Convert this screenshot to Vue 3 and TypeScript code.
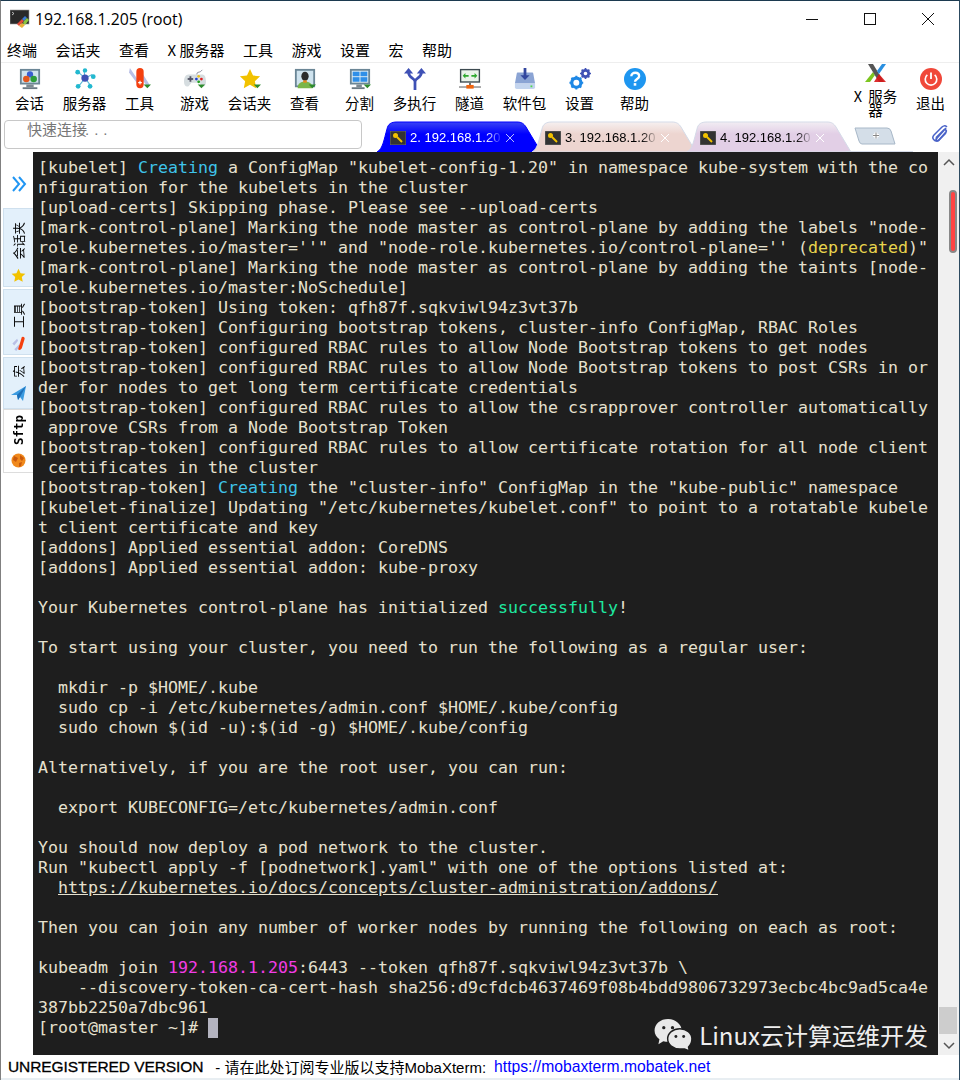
<script setup lang="ts">
type Seg = { t: string; c?: string };
const C = 'cy', Y = 'ye', G = 'gr', M = 'ma', U = 'ul';
const lines: Seg[][] = [
  [{ t: '[kubelet] ' }, { t: 'Creating', c: C }, { t: ' a ConfigMap "kubelet-config-1.20" in namespace kube-system with the co' }],
  [{ t: 'nfiguration for the kubelets in the cluster' }],
  [{ t: '[upload-certs] Skipping phase. Please see --upload-certs' }],
  [{ t: '[mark-control-plane] Marking the node master as control-plane by adding the labels "node-' }],
  [{ t: 'role.kubernetes.io/master=\'\'" and "node-role.kubernetes.io/control-plane=\'\' (' }, { t: 'deprecated', c: Y }, { t: ')"' }],
  [{ t: '[mark-control-plane] Marking the node master as control-plane by adding the taints [node-' }],
  [{ t: 'role.kubernetes.io/master:NoSchedule]' }],
  [{ t: '[bootstrap-token] Using token: qfh87f.sqkviwl94z3vt37b' }],
  [{ t: '[bootstrap-token] Configuring bootstrap tokens, cluster-info ConfigMap, RBAC Roles' }],
  [{ t: '[bootstrap-token] configured RBAC rules to allow Node Bootstrap tokens to get nodes' }],
  [{ t: '[bootstrap-token] configured RBAC rules to allow Node Bootstrap tokens to post CSRs in or' }],
  [{ t: 'der for nodes to get long term certificate credentials' }],
  [{ t: '[bootstrap-token] configured RBAC rules to allow the csrapprover controller automatically' }],
  [{ t: ' approve CSRs from a Node Bootstrap Token' }],
  [{ t: '[bootstrap-token] configured RBAC rules to allow certificate rotation for all node client' }],
  [{ t: ' certificates in the cluster' }],
  [{ t: '[bootstrap-token] ' }, { t: 'Creating', c: C }, { t: ' the "cluster-info" ConfigMap in the "kube-public" namespace' }],
  [{ t: '[kubelet-finalize] Updating "/etc/kubernetes/kubelet.conf" to point to a rotatable kubele' }],
  [{ t: 't client certificate and key' }],
  [{ t: '[addons] Applied essential addon: CoreDNS' }],
  [{ t: '[addons] Applied essential addon: kube-proxy' }],
  [{ t: '' }],
  [{ t: 'Your Kubernetes control-plane has initialized ' }, { t: 'successfully', c: G }, { t: '!' }],
  [{ t: '' }],
  [{ t: 'To start using your cluster, you need to run the following as a regular user:' }],
  [{ t: '' }],
  [{ t: '  mkdir -p $HOME/.kube' }],
  [{ t: '  sudo cp -i /etc/kubernetes/admin.conf $HOME/.kube/config' }],
  [{ t: '  sudo chown $(id -u):$(id -g) $HOME/.kube/config' }],
  [{ t: '' }],
  [{ t: 'Alternatively, if you are the root user, you can run:' }],
  [{ t: '' }],
  [{ t: '  export KUBECONFIG=/etc/kubernetes/admin.conf' }],
  [{ t: '' }],
  [{ t: 'You should now deploy a pod network to the cluster.' }],
  [{ t: 'Run "kubectl apply -f [podnetwork].yaml" with one of the options listed at:' }],
  [{ t: '  ' }, { t: 'https://kubernetes.io/docs/concepts/cluster-administration/addons/', c: U }],
  [{ t: '' }],
  [{ t: 'Then you can join any number of worker nodes by running the following on each as root:' }],
  [{ t: '' }],
  [{ t: 'kubeadm join ' }, { t: '192.168.1.205', c: M }, { t: ':6443 --token qfh87f.sqkviwl94z3vt37b \\' }],
  [{ t: '    --discovery-token-ca-cert-hash sha256:d9cfdcb4637469f08b4bdd9806732973ecbc4bc9ad5ca4e' }],
  [{ t: '387bb2250a7dbc961' }],
];
const menus = ['终端', '会话夹', '查看', 'X 服务器', '工具', '游戏', '设置', '宏', '帮助'];
const tools = [
  { k: 'session', l: '会话' }, { k: 'servers', l: '服务器' }, { k: 'tools', l: '工具' }, { k: 'games', l: '游戏' },
  { k: 'star', l: '会话夹' }, { k: 'view', l: '查看' }, { k: 'split', l: '分割' }, { k: 'multi', l: '多执行' },
  { k: 'tunnel', l: '隧道' }, { k: 'pkg', l: '软件包' }, { k: 'gear', l: '设置' }, { k: 'help', l: '帮助' },
];
const tabs = [
  { n: '2. 192.168.1.20', cls: 'active', a: '#3a44f4', b: '#0000ff', line: '#0000ff', x: '#b8c0ff' },
  { n: '3. 192.168.1.20', cls: '', a: '#f6f0f0', b: '#edd5d0', line: '#d5dbe8', x: '#ffffff' },
  { n: '4. 192.168.1.20', cls: '', a: '#f2edf3', b: '#e2cfe6', line: '#d5dbe8', x: '#ffffff' },
];
</script>

<template>
  <div class="win">
    <header class="title">
      <svg class="appicon" width="20" height="20" viewBox="0 0 20 20">
        <rect x="0" y="1" width="19" height="14" fill="#2a2a2a" stroke="#999" stroke-width=".6"/>
        <path d="M2 3l2 1.500L2 6" stroke="#ddd" fill="none" stroke-width=".8"/>
        <path d="M7 15l5-5 2 2-5 5z" fill="#e04a3a"/>
        <path d="M12 10l3-3 2 2-3 3z" fill="#3a7bd5"/>
        <path d="M14 12l3-3 2 2-4 5-2-2z" fill="#8cc63f"/>
        <path d="M9 17l3-3 3 2-3 3z" fill="#e8b23a"/>
      </svg>
      <span class="title-text">192.168.1.205 (root)</span>
      <div class="winbtns">
        <svg width="14" height="14" viewBox="0 0 14 14"><path d="M1 7.500h12" stroke="#111" fill="none"/></svg>
        <svg width="14" height="14" viewBox="0 0 14 14"><rect x="1.500" y="1.500" width="11" height="11" stroke="#111" fill="none"/></svg>
        <svg width="14" height="14" viewBox="0 0 14 14"><path d="M1 1l12 12M13 1L1 13" stroke="#111" fill="none"/></svg>
      </div>
    </header>

    <nav class="menu">
      <span v-for="m in menus" :key="m">{{ m }}</span>
    </nav>

    <section class="toolbar">
      <div v-for="t in tools" :key="t.k" class="tool">
        <svg class="ti" width="22" height="22" viewBox="0 0 24 24">
          <template v-if="t.k === 'session'">
            <rect x="1" y="1" width="22" height="17" fill="#6b8696"/><rect x="3" y="3" width="18" height="13" fill="#cfe3ee"/>
            <rect x="8" y="18" width="8" height="3" fill="#7d8a92"/><rect x="4" y="21" width="16" height="2" fill="#6b7a84"/>
            <circle cx="12" cy="7" r="3.400" fill="#3a5fd0"/><circle cx="8" cy="12" r="3.600" fill="#e2571e"/><circle cx="16" cy="12" r="3.600" fill="#2e9d3a"/>
          </template>
          <template v-else-if="t.k === 'servers'">
            <path d="M12 11L4 4M12 11l8-4M12 11l-1-9M12 11L5 20M12 11l6 8" stroke="#5fb8d8" stroke-width="1.200"/>
            <circle cx="12" cy="11" r="4" fill="#3f51b5"/>
            <circle cx="4" cy="4.500" r="2.600" fill="#22b8cf"/><circle cx="12" cy="2.600" r="2.400" fill="#22b8cf"/><circle cx="21" cy="9.500" r="2.600" fill="#22b8cf"/><circle cx="4.500" cy="20" r="2.600" fill="#22b8cf"/><circle cx="17.500" cy="20" r="2.600" fill="#22b8cf"/>
          </template>
          <template v-else-if="t.k === 'tools'">
            <path d="M1 0l10 15-2 2L0 5z" fill="#b9c0e6"/><path d="M23 19L14 5l-1 5 7 11z" fill="#b9c0e6"/>
            <rect x="8" y="0" width="8" height="22" rx="4" fill="#f4400f"/>
            <path d="M10 16h4M12 14v4" stroke="#fff" stroke-width="1.300"/>
            <path d="M16 18h8l-4 4z" fill="#2e8b2e"/>
          </template>
          <template v-else-if="t.k === 'games'">
            <path d="M5 7h15c3 0 4 4 4 8 0 4-2 6-4 5l-3-4H8l-3 4c-3 1-5-1-5-5 0-5 2-8 5-8z" fill="#d6dde0"/>
            <path d="M14 7c0-3 2-2 4-3l2-2" stroke="#889" fill="none"/>
            <rect x="4" y="11" width="6" height="2" fill="#556"/><rect x="6" y="9" width="2" height="6" fill="#556"/>
            <circle cx="16" cy="9" r="1.500" fill="#e8c020"/><circle cx="19" cy="12" r="1.500" fill="#e02020"/><circle cx="13.500" cy="12" r="1.500" fill="#2040d0"/><circle cx="16" cy="15" r="1.500" fill="#20a020"/>
            <path d="M15 18h8l-4 4z" fill="#2e8b2e"/>
          </template>
          <template v-else-if="t.k === 'star'">
            <path d="M12 1l3.300 7.200 7.700.9-5.700 5.300 1.500 7.700L12 18.300 5.200 22.100l1.500-7.700L1 9.100l7.700-.9z" fill="#f2c200"/>
            <path d="M16 18h8l-4 4z" fill="#2e8b2e"/>
          </template>
          <template v-else-if="t.k === 'view'">
            <rect x="1" y="1" width="22" height="20" fill="#6b8696"/><rect x="3" y="3" width="18" height="16" fill="#cfe3ee"/>
            <ellipse cx="12" cy="9" rx="4" ry="5" fill="#2b2b2b"/><path d="M4 22c0-5 3-7 8-7s8 2 8 7z" fill="#7ab648"/><rect x="10" y="13.500" width="4" height="2.500" fill="#e88a1a"/>
            <path d="M16 18h8l-4 4z" fill="#2e8b2e"/>
          </template>
          <template v-else-if="t.k === 'split'">
            <rect x="1" y="1" width="22" height="17" fill="#6b8696"/><rect x="3" y="3" width="18" height="13" fill="#e3eff5"/>
            <rect x="4" y="4" width="7.500" height="5" fill="#2f8fe8"/><rect x="12.500" y="4" width="7.500" height="5" fill="#2f8fe8"/><rect x="4" y="10" width="7.500" height="5" fill="#2f8fe8"/><rect x="12.500" y="10" width="7.500" height="5" fill="#2f8fe8"/>
            <rect x="8" y="18" width="6" height="3" fill="#7d8a92"/><rect x="3" y="21" width="14" height="2" fill="#6b7a84"/>
            <path d="M16 18h8l-4 4z" fill="#2e8b2e"/>
          </template>
          <template v-else-if="t.k === 'multi'">
            <path d="M12 24V15C12 11 5 11 5 5M12 15c0-4 7-4 7-10" stroke="#3f51b5" stroke-width="3" fill="none"/>
            <path d="M5 0l5 6H0zM19 0l5 6H14z" fill="#3f51b5"/>
          </template>
          <template v-else-if="t.k === 'tunnel'">
            <rect x="1" y="1" width="22" height="15" fill="#3c4a50"/><rect x="2.500" y="2.500" width="19" height="12" fill="#eaf3ea"/>
            <path d="M4 8.500l3-3v2h3.500v2H7v2zM20 8.500l-3-3v2h-3.500v2H17v2z" fill="#2ea82e"/>
            <rect x="11" y="16" width="2" height="3" fill="#666"/><rect x="0" y="20" width="24" height="1.500" fill="#888"/><rect x="8" y="18.500" width="8" height="4" fill="#f0650e"/>
          </template>
          <template v-else-if="t.k === 'pkg'">
            <path d="M3 6q0-1 1-1h16q1 0 1 1l2 11H1z" fill="#8ba4d4"/><path d="M1 17h22v4q0 2-2 2H3q-2 0-2-2z" fill="#c3d4ee"/>
            <rect x="10.500" y="0" width="3" height="9" fill="#33479e"/><path d="M7 8h10l-5 5z" fill="#33479e"/><rect x="18" y="19" width="2" height="2" fill="#4fd64f"/>
          </template>
          <template v-else-if="t.k === 'gear'">
            <circle cx="8" cy="16" r="5" fill="none" stroke="#1e88e5" stroke-width="3.500"/>
            <path d="M8 8.500v3M8 20.500v3M.500 16h3M12.500 16h3M2.700 10.700l2 2M11.300 19.300l2 2M13.300 10.700l-2 2M4.700 19.300l-2 2" stroke="#1e88e5" stroke-width="2.200"/>
            <circle cx="18" cy="6" r="3.500" fill="none" stroke="#3f51b5" stroke-width="3"/>
            <path d="M18 0v2.500M18 9.500V12M12 6h2.500M21.500 6H24M13.800 1.800l1.800 1.800M20.400 8.400l1.800 1.800M22.200 1.800l-1.800 1.800M15.600 8.400l-1.800 1.800" stroke="#3f51b5" stroke-width="1.800"/>
          </template>
          <template v-else>
            <circle cx="12" cy="12" r="12" fill="#1e96f0"/>
            <path d="M8 9c0-5 8.500-5 8.500 0 0 3-4.500 3-4.500 6" fill="none" stroke="#fff" stroke-width="2.600"/><rect x="10.600" y="16.500" width="2.800" height="2.800" fill="#fff"/>
          </template>
        </svg>
        <span class="tl">{{ t.l }}</span>
      </div>
      <div class="tool push xsrv">
        <svg class="ti xi" width="22" height="19" viewBox="0 0 22 19">
          <path d="M0 18L8 8l2 3-5 7z" fill="#7cc520"/><path d="M3 0h5l11 18h-5z" fill="#555"/><path d="M9 18l5-8 7 8z" fill="#d81818" opacity=".9"/><path d="M12 7l5-7h4l-7 10z" fill="#2a8fe0"/>
        </svg>
        <span class="tl xl">X 服务器</span>
      </div>
      <div class="tool">
        <svg class="ti" width="22" height="22" viewBox="0 0 24 24">
          <circle cx="12" cy="12" r="12" fill="#f0483a"/>
          <path d="M8 7.500a6.300 6.300 0 1 0 8 0" fill="none" stroke="#fff" stroke-width="1.800"/><path d="M12 5v7" stroke="#fff" stroke-width="2"/>
        </svg>
        <span class="tl">退出</span>
      </div>
    </section>

    <section class="tabrow">
      <div class="quick"><span>快速连接</span><span class="dots">...</span></div>
      <div class="tabs">
        <div v-for="tab in tabs" :key="tab.n" class="tab" :class="tab.cls">
          <svg class="tabbg" width="164" height="31" viewBox="0 0 164 31">
            <defs>
              <linearGradient :id="'g' + tab.n[0]" x1="0" y1="0" x2="0" y2="1">
                <stop offset="0" :stop-color="tab.a"/><stop offset=".4" :stop-color="tab.b"/>
              </linearGradient>
            </defs>
            <path d="M0 31C6 28 7 18 10 8 11 3 14 1 20 1H140c5 0 7 2 9 5L164 31Z" :fill="'url(#g' + tab.n[0] + ')'" :stroke="tab.line"/>
          </svg>
          <svg class="key" width="16" height="14" viewBox="0 0 16 14">
            <rect width="16" height="14" fill="#333" stroke="#777" stroke-width=".8"/>
            <circle cx="5.500" cy="4.500" r="2.500" fill="#f2c200"/><path d="M7 6l5 5" stroke="#f2c200" stroke-width="2"/>
          </svg>
          <span class="tabtext">{{ tab.n }}</span>
          <svg class="tabx" width="10" height="10" viewBox="0 0 10 10"><path d="M1 1l8 8M9 1l-8 8" :stroke="tab.x" fill="none"/></svg>
        </div>
        <svg class="addtab" width="42" height="18" viewBox="0 0 42 18">
          <path d="M1 1h32q3 0 4 3l4 13H8Q6 17 5 14z" fill="#d4dee8" stroke="#a8b8c8"/>
          <path d="M22 5.500v6M19 8.500h6" stroke="#fff" stroke-width="3"/><path d="M22 5.500v6M19 8.500h6" stroke="#888" stroke-width="1"/>
        </svg>
      </div>
      <svg class="clip" width="18" height="18" viewBox="0 0 18 18">
        <path d="M15 3 6 13c-2 2 0 4 2 2l7-8c1-2-1-3-2-2L5 13" fill="none" stroke="#4a63c8" stroke-width="1.800"/>
        <path d="M16 2c-2-2-4-1-5 0L3 10c-3 3 1 8 5 5l7-7" fill="none" stroke="#4a63c8" stroke-width="1.500"/>
      </svg>
    </section>

    <main class="body">
      <aside class="side">
        <svg class="chev" width="16" height="16" viewBox="0 0 16 16">
          <path d="M2 1l6 7-6 7M8 1l6 7-6 7" fill="none" stroke="#2196f3" stroke-width="2"/>
        </svg>
        <div class="stab s1">
          <span class="vt">会话夹</span>
          <svg width="15" height="15" viewBox="0 0 24 24"><path d="M12 1l3.300 7.200 7.700.9-5.700 5.300 1.500 7.700L12 18.300 5.200 22.100l1.500-7.700L1 9.100l7.700-.9z" fill="#f2c200"/></svg>
        </div>
        <div class="stab s2">
          <span class="vt">工具</span>
          <svg width="16" height="17" viewBox="0 0 16 18"><path d="M1 8l5-5 1 2-4 5zM3 14l5-5 1 2-4 5z" fill="#b9c0e6"/><path d="M11 1q3-1 3 2l-3 10q-2 3-4 1z" fill="#f4400f"/></svg>
        </div>
        <div class="stab s3">
          <span class="vt">宏</span>
          <svg width="16" height="16" viewBox="0 0 16 16"><path d="M0 9 15 0l-3 15-3-4-2 3-1-5z" fill="#3b9be0"/><path d="M6 9l9-9-6 11-2 3z" fill="#1d6fb8"/></svg>
        </div>
        <div class="stab s4">
          <span class="vt sf">Sftp</span>
          <svg width="15" height="15" viewBox="0 0 15 15"><circle cx="7.500" cy="7.500" r="7" fill="#f0891c"/><path d="M3 3l4 2-2 4-3-2zM9 2l4 3-2 3-2-2zM8 10l3-1-1 4-2 1z" fill="#c9590c"/></svg>
        </div>
      </aside>

      <div class="term">
        <div v-for="(ln, i) in lines" :key="i" class="ln"><span v-for="(s, j) in ln" :key="j" :class="s.c">{{ s.t }}</span></div>
        <div class="ln">[root@master ~]# <span class="cur"> </span></div>
        <div class="mark">
          <svg width="40" height="33" viewBox="0 0 40 34">
            <path d="M15 1C7 1 1 6 1 13c0 4 2 7 5 9l-1 5 5-3c2 .5 3 .5 5 .5C23 24.500 29 19 29 13S23 1 15 1z" fill="#e8e8e8"/>
            <circle cx="10.500" cy="10" r="1.700" fill="#222"/><circle cx="19.500" cy="10" r="1.700" fill="#222"/>
            <path d="M27 11c-7 0-12.500 4.500-12.500 10.500S20 32 27 32l5 0c.5 0 3 1.500 5 2l-1-4c2-2 3.500-5 3.500-8.500C39.500 15.500 34 11 27 11z" fill="#e8e8e8" stroke="#1e1e1e" stroke-width="1.500"/>
            <circle cx="23" cy="19" r="1.500" fill="#222"/><circle cx="31" cy="19" r="1.500" fill="#222"/>
          </svg>
          <span>Linux云计算运维开发</span>
        </div>
      </div>

      <div class="scroll">
        <svg class="arr" width="12" height="8" viewBox="0 0 12 8"><path d="M1 7l5-5 5 5" fill="none" stroke="#555" stroke-width="1.500"/></svg>
        <div class="redmark"></div>
        <div class="thumb"></div>
        <svg class="arr" width="12" height="8" viewBox="0 0 12 8"><path d="M1 1l5 5 5-5" fill="none" stroke="#555" stroke-width="1.500"/></svg>
      </div>
    </main>

    <footer class="status">
      <b>UNREGISTERED VERSION</b>
      <span class="st2">- 请在此处订阅专业版以支持MobaXterm:</span>
      <span class="lnk">https://mobaxterm.mobatek.net</span>
    </footer>
    <div class="strip"></div>
  </div>
</template>

<style>
html, body { margin: 0; background: #fff; }
</style>

<style scoped>
.win { width: 960px; height: 1080px; box-sizing: border-box; background: #fff; overflow: hidden; position: relative;
  border-top: 1px solid #1c3a50; border-left: 1px solid #808080; border-right: 1px solid #2c4a60; display: flex; flex-direction: column;
  font-family: "Noto Sans CJK SC", "Noto Sans", sans-serif; color: #000; }
.title { height: 36px; display: flex; align-items: center; padding-left: 9px; flex: none; }
.appicon { margin-right: 5px; }
.title-text { font: 15.800px "Open Sans", sans-serif; }
.winbtns { margin-left: auto; display: flex; gap: 44px; padding-right: 24px; }
.menu { height: 25px; display: flex; align-items: center; flex: none; padding-left: 6px; gap: 18.500px; font-size: 15px; border-bottom: 1px solid #eee; }
.toolbar { height: 56px; display: flex; flex: none; padding: 0 1px; }
.tool { width: 55px; display: flex; flex-direction: column; align-items: center; padding-top: 5px; }
.ti { flex: none; }
.tl { font-size: 14.500px; line-height: 16px; margin-top: 5px; text-align: center; white-space: normal; }
.push { margin-left: auto; }
.xsrv { padding-top: 1px; }
.xl { width: 50px; line-height: 14px; margin-top: 6px; word-spacing: 3px; }
.tabrow { height: 33px; display: flex; flex: none; position: relative; padding-left: 3px; }
.tabrow::after { content: ""; position: absolute; left: 845px; bottom: 0; width: 67px; height: 1px; background: #d5dbe8; }
.quick { height: 27px; border: 1px solid #c8c8c8; border-radius: 4px; margin-top: 1px; font-size: 15px; color: #777; line-height: 16px; padding-left: 22px; width: 334px; flex: none; }
.dots { letter-spacing: 5px; margin-left: -2px; font-family: "Liberation Sans", sans-serif; }
.tabs { display: flex; margin-left: 15px; align-items: flex-end; }
.tab { width: 155px; height: 31px; position: relative; display: flex; align-items: center; padding: 2px 0 0 13px; box-sizing: border-box; font: 13px "Liberation Sans", sans-serif; overflow: visible; }
.tabbg { position: absolute; left: 0; top: 0; }
.key, .tabtext, .tabx { position: relative; }
.tabtext { margin-left: 4px; width: 93px; white-space: nowrap; -webkit-mask-image: linear-gradient(to right, #000 82%, transparent); mask-image: linear-gradient(to right, #000 82%, transparent); }
.tab.active { color: #fff; }
.tabx { margin-left: 2px; }
.addtab { margin-left: 12px; margin-bottom: 7px; }
.clip { position: absolute; right: 10px; top: 6px; }
.body { flex: 1; display: flex; min-height: 0; }
.side { width: 32px; flex: none; display: flex; flex-direction: column; align-items: flex-end; padding-top: 24px; box-sizing: border-box; }
.chev { margin-right: 6px; margin-bottom: 16px; }
.stab { width: 30px; box-sizing: border-box; background: #e3f0fb; border: 1px solid #cfe0ee; border-right: 0; display: flex; flex-direction: column; align-items: center; padding-top: 13px; gap: 8px; margin-bottom: 2px; }
.s1 { height: 79px; } .s2 { height: 66px; } .s3 { height: 52px; padding-top: 7px; }
.s4 { height: 64px; background: #fff; border-color: #ddd; margin-top: -2px; margin-bottom: 0; padding-top: 5px; }
.vt { writing-mode: vertical-rl; text-orientation: sideways; transform: rotate(180deg); font-size: 12.500px; line-height: 16px; }
.sf { font: bold 12.500px "DejaVu Sans Mono", monospace; line-height: 16px; }
.term { width: 905px; flex: none; background: #1e1e1e; color: #e6e1cf; position: relative; padding: 6px 0 0 5px; box-sizing: border-box; font: 16.610px/20px "DejaVu Sans Mono", monospace; overflow: hidden; }
.ln { height: 20px; white-space: pre; }
.cy { color: #3fc4ea; } .ye { color: #e8d44d; } .gr { color: #1ee8a0; } .ma { color: #f23ce6; } .ul { text-decoration: underline; }
.cur { display: inline-block; width: 10px; height: 20px; background: #b4b4c0; vertical-align: top; }
.mark { position: absolute; right: 10px; bottom: 3px; display: flex; align-items: center; gap: 6px; color: #eee; font: 24px "Noto Sans CJK SC", sans-serif; }
.scroll { flex: 1; background: #f0f0f0; display: flex; flex-direction: column; align-items: center; position: relative; padding: 6px 0 5px; box-sizing: border-box; }
.redmark { position: absolute; left: 11px; top: 38px; width: 8px; height: 63px; box-sizing: border-box; background: #f44; border: 2px solid #888; border-radius: 4px; }
.thumb { width: 18px; height: 27px; margin-top: auto; margin-bottom: 8px; background: #cdcdcd; align-self: flex-start; margin-left: 1px; }
.status { height: 23px; flex: none; display: flex; align-items: center; padding-left: 7px; font: 15.500px "Liberation Sans", sans-serif; white-space: nowrap; }
.status b { font-weight: normal; -webkit-text-stroke: .3px #000; letter-spacing: -.1px; }
.st2 { margin-left: 12px; font: 15px "Liberation Sans", "Noto Sans CJK SC", sans-serif; }
.lnk { margin-left: 8px; color: #00f; font-size: 15.700px; }
.strip { height: 2px; flex: none; background: #e8eef2; }
</style>
